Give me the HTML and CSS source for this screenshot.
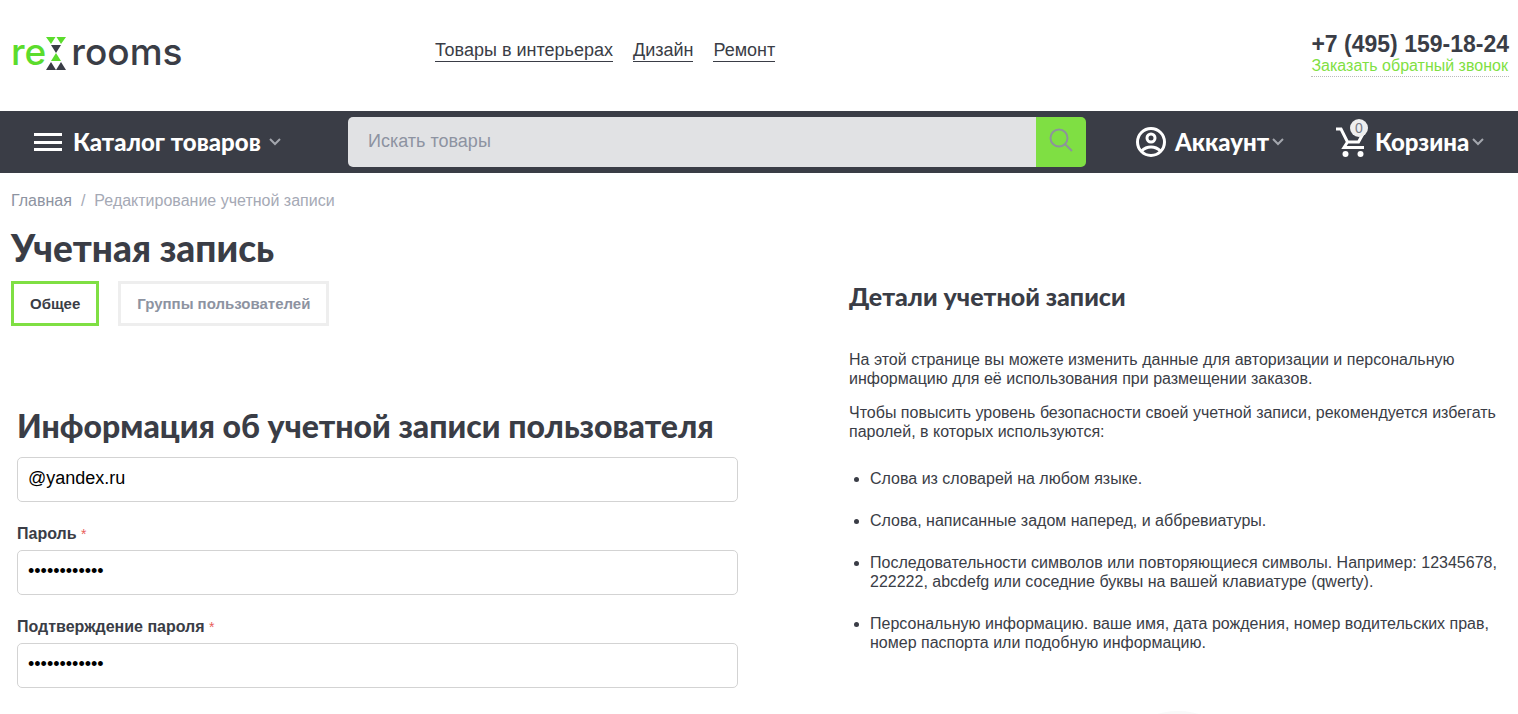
FILE: index.html
```
<!DOCTYPE html>
<html lang="ru">
<head>
<meta charset="utf-8">
<meta name="viewport" content="width=device-width, initial-scale=1">
<title>Учетная запись</title>
<link rel="stylesheet" href="styles.css">
</head>
<body>
<header class="top">
  <a class="logo" href="#" aria-label="re rooms">
    <span class="logo-text logo-green">re</span>
    <svg class="logo-mark" viewBox="0 0 20 33" aria-hidden="true">
      <path fill="#5bdc2c" d="M0 0h9.500L5 7zM10.500 0H20l-5 7zM10 16l5 8H5z"/>
      <path fill="#3a3d46" d="M5 8h10l-5 8zM5 25l5 8H0zM15 25l5 8H10z"/>
    </svg>
    <span class="logo-text logo-dark">rooms</span>
  </a>
  <nav class="top-nav">
    <a href="#">Товары в интерьерах</a>
    <a href="#">Дизайн</a>
    <a href="#">Ремонт</a>
  </nav>
  <div class="phone">
    <a class="phone-number" href="tel:+74951591824">+7 (495) 159-18-24</a>
    <a class="callback" href="#">Заказать обратный звонок</a>
  </div>
</header>

<div class="bar">
  <button class="bar-item catalog" type="button">
    <svg class="burger" viewBox="0 0 28 20" aria-hidden="true"><path fill="#fff" d="M0 1h28v3H0zM0 9h28v3H0zM0 16h28v3H0z"/></svg>
    Каталог товаров
    <svg class="chevron chevron-wide" viewBox="0 0 12 8" aria-hidden="true"><path d="M1 1l5 5 5-5"/></svg>
  </button>
  <form class="search">
    <input class="search-input" type="text" placeholder="Искать товары" aria-label="Искать товары">
    <button class="search-button" type="button" aria-label="Найти">
      <svg viewBox="0 0 24 24" aria-hidden="true"><circle cx="10" cy="10" r="8.500"/><path d="M16 16l7 7"/></svg>
    </button>
  </form>
  <button class="bar-item account" type="button">
    <svg class="user" viewBox="0 0 30 30" aria-hidden="true"><circle cx="15" cy="15" r="13.500"/><circle cx="15" cy="11" r="4"/><path d="M5.500 24c3-3 6-4 9.500-4s6.500 1 9.500 4"/></svg>
    Аккаунт
    <svg class="chevron" viewBox="0 0 12 8" aria-hidden="true"><path d="M1 1l5 5 5-5"/></svg>
  </button>
  <button class="bar-item cart" type="button">
    <span class="cart-icon">
      <svg viewBox="0 0 30 30" aria-hidden="true"><path class="cart-line" d="M0 2h5l6.500 13h11l5.500-10M11.500 15l-3.500 5.500h20"/><circle cx="9.500" cy="27" r="3"/><circle cx="24.500" cy="27" r="3"/></svg>
      <span class="badge">0</span>
    </span>
    Корзина
    <svg class="chevron" viewBox="0 0 12 8" aria-hidden="true"><path d="M1 1l5 5 5-5"/></svg>
  </button>
</div>

<main class="page">
  <nav class="crumbs"><a href="#">Главная</a><span>/</span><span>Редактирование учетной записи</span></nav>
  <h1 class="title">Учетная запись</h1>
  <div class="columns">
    <section class="profile">
      <div class="tabs">
        <button class="tab tab-active" type="button">Общее</button>
        <button class="tab" type="button">Группы пользователей</button>
      </div>
      <form class="form">
        <h2 class="form-title">Информация об учетной записи пользователя</h2>
        <input class="field" type="text" value="@yandex.ru" aria-label="E-mail">
        <label class="label" for="password">Пароль <span class="star">*</span></label>
        <input class="field" id="password" type="password" value="123456789012">
        <label class="label" for="confirm">Подтверждение пароля <span class="star">*</span></label>
        <input class="field" id="confirm" type="password" value="123456789012">
      </form>
    </section>
    <aside class="details">
      <h2 class="details-title">Детали учетной записи</h2>
      <p>На этой странице вы можете изменить данные для авторизации и персональную информацию для её использования при размещении заказов.</p>
      <p>Чтобы повысить уровень безопасности своей учетной записи, рекомендуется избегать паролей, в которых используются:</p>
      <ul class="rules">
        <li>Слова из словарей на любом языке.</li>
        <li>Слова, написанные задом наперед, и аббревиатуры.</li>
        <li>Последовательности символов или повторяющиеся символы. Например: 12345678, 222222, abcdefg или соседние буквы на вашей клавиатуре (qwerty).</li>
        <li>Персональную информацию. ваше имя, дата рождения, номер водительских прав, номер паспорта или подобную информацию.</li>
      </ul>
      <div class="disc"></div>
    </aside>
  </div>
</main>
</body>
</html>
```
FILE: styles.css
```
* { box-sizing: border-box; }
body {
  margin: 0;
  background: #fff;
  color: #3a3d46;
  font-family: "Liberation Sans", Arial, sans-serif;
  font-size: 16px;
}
a { color: inherit; text-decoration: none; }
button, input { font: inherit; color: inherit; }
svg { display: block; flex: none; }
h1, h2, p, ul { margin: 0; }

.top {
  display: grid;
  grid-template-columns: 424px 1fr auto;
  align-items: center;
  height: 111px;
  padding: 0 7px 4px 11px;
}
.logo {
  display: flex;
  align-items: center;
  font-family: Inter, sans-serif;
  font-size: 37px;
  font-weight: 500;
  line-height: 40px;
}
.logo-text { padding-bottom: 4px; }
.logo-green { color: #5bdc2c; }
.logo-mark { width: 20px; height: 33px; }
.logo-dark { padding-left: 5px; }
.top-nav { display: flex; gap: 20px; font-size: 18px; line-height: 22px; padding-bottom: 6px; }
.top-nav a { border-bottom: 1px solid #3a3d46; }
.phone { display: flex; flex-direction: column; padding: 2px 2px 0 0; }
.phone-number { font-size: 23px; font-weight: 700; line-height: 24px; }
.callback { color: #7fdf43; line-height: 20px; border-bottom: 1px dotted #bbb; }

.bar {
  display: flex;
  align-items: center;
  height: 62px;
  padding: 0 34px;
  background: #3a3d46;
}
.bar-item {
  display: flex;
  align-items: center;
  padding: 0;
  border: 0;
  background: none;
  color: #fff;
  font-family: Lato, sans-serif;
  font-size: 24px;
  font-weight: 900;
  line-height: 30px;
  white-space: nowrap;
}
.catalog { width: 314px; }
.burger { width: 28px; height: 20px; margin-right: 11px; }
.chevron { width: 12px; height: 8px; margin-left: 3px; fill: none; stroke: #a3a6ad; stroke-width: 2; }
.chevron-wide { margin-left: 8px; }
.search { display: flex; flex: 1; height: 50px; border-radius: 5px; overflow: hidden; }
.search-input { flex: 1; min-width: 0; padding: 0 20px 2px; border: 0; background: #e1e2e4; font-size: 18px; }
.search-input::placeholder { color: #8d93a1; opacity: 1; }
.search-button { display: grid; place-items: center; width: 50px; padding: 0 0 4px; border: 0; background: #7fdf43; }
.search-button svg { width: 24px; height: 24px; fill: none; stroke: #8d939b; stroke-width: 2; }
.account { margin-left: 50px; width: 150px; }
.user { width: 30px; height: 30px; margin-right: 9px; fill: none; stroke: #fff; stroke-width: 3; }
.cart { margin-left: 50px; width: 148px; }
.cart-icon { position: relative; margin-right: 9px; }
.cart-icon svg { width: 30px; height: 30px; fill: #fff; }
.cart-icon .cart-line { fill: none; stroke: #fff; stroke-width: 3; }
.badge {
  position: absolute;
  top: -8px;
  right: -2px;
  width: 18px;
  height: 18px;
  border-radius: 9px;
  background: #eee;
  color: #777b86;
  font: 14px/18px "Liberation Sans", Arial, sans-serif;
  text-align: center;
}

.page { padding: 18px 11px 0; }
.crumbs { display: flex; gap: 9px; color: #a5a9b5; line-height: 20px; }
.crumbs a { color: #8d93a1; }
.title { margin-top: 16px; font: 900 37px/42px Lato, sans-serif; }
.columns { display: grid; grid-template-columns: 727fr 658fr; column-gap: 111px; margin-top: 12px; }
.tabs { display: flex; gap: 19px; }
.tab {
  height: 45px;
  padding: 0 16px;
  border: 3px solid #eee;
  background: #fff;
  color: #8d93a1;
  font-size: 15px;
  font-weight: 700;
}
.tab-active { border-color: #7fdf43; color: #3a3d46; }
.form { display: flex; flex-direction: column; padding: 82px 0 0 6px; }
.form-title { margin-bottom: 13px; font: 900 32px/36px Lato, sans-serif; white-space: nowrap; }
.field {
  width: 100%;
  height: 45px;
  padding: 0 10px 3px;
  border: 1px solid #d3d3d3;
  border-radius: 5px;
  background: #fff;
  color: #000;
  font-size: 18px;
}
.label { margin: 22px 0 6px; font-weight: 700; line-height: 20px; }
.star { color: #e8605a; font-size: 14px; font-weight: 400; vertical-align: top; }

.details { line-height: 19px; }
.details-title { margin-bottom: 39px; font: 900 25px/30px Lato, sans-serif; }
.details p { margin-bottom: 15px; }
.rules { margin-top: 28px; padding-left: 21px; }
.rules li { margin-bottom: 23px; }
.disc { width: 150px; height: 150px; margin: 59px auto 0; border-radius: 50%; background: #f9f9f9; }
```
